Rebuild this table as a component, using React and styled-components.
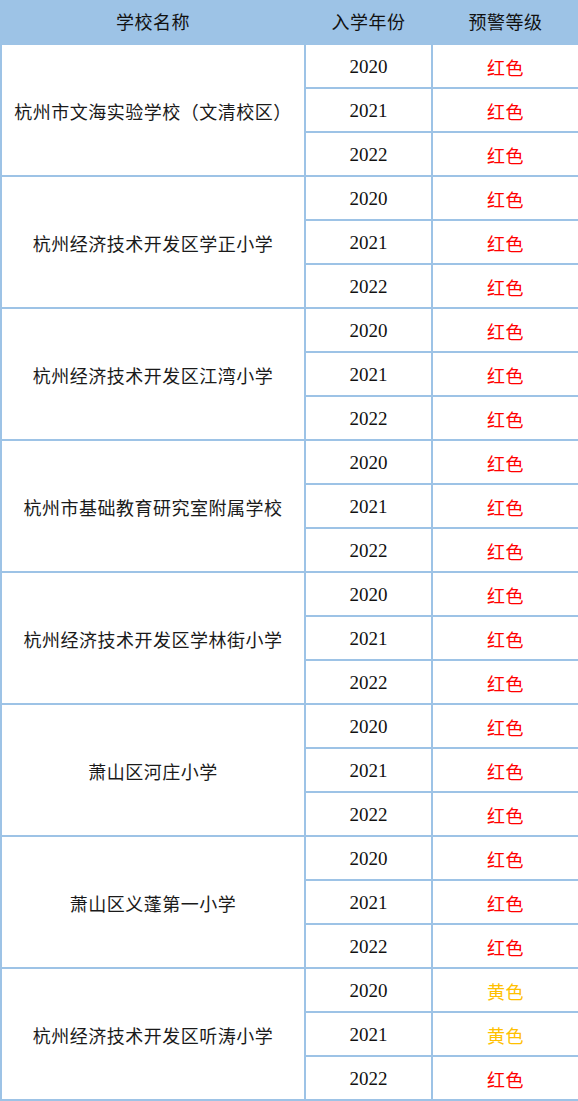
import React from "react";
import styled, { createGlobalStyle } from "styled-components";

const GlobalStyle = createGlobalStyle`
  html, body {
    margin: 0;
    padding: 0;
    background: #ffffff;
  }
`;

const Table = styled.table`
  width: 578px;
  border-collapse: collapse;
  table-layout: fixed;
  font-family: "Liberation Serif", "Noto Sans CJK SC", serif;
  font-size: 18px;
  color: #111;
`;

const Col = styled.col`
  width: ${(p) => p.$w}px;
`;

const HeadRow = styled.tr`
  background: #9dc3e6;
  height: 44px;
`;

const HeadCell = styled.th`
  font-weight: normal;
  font-family: "Noto Sans CJK SC", sans-serif;
  font-size: 18px;
  letter-spacing: 0.5px;
  text-align: center;
  vertical-align: middle;
  padding: 0 0 2px;
  border: 2px solid #9dc3e6;
  border-top: none;
`;

const Row = styled.tr`
  height: 44px;
`;

const Cell = styled.td`
  border: 2px solid #9dc3e6;
  text-align: center;
  vertical-align: middle;
  padding: 2px 0 0;
`;

const NameCell = styled(Cell)`
  font-family: "Noto Sans CJK SC", sans-serif;
  font-size: 18px;
  letter-spacing: 0.5px;
  color: #1a1a1a;
`;

const YearCell = styled(Cell)`
  font-family: "Liberation Serif", serif;
  font-size: 19px;
`;

const LevelCell = styled(Cell)`
  font-family: "Noto Sans CJK SC", sans-serif;
  font-size: 18px;
  letter-spacing: 0.5px;
  color: ${(p) => (p.$level === "黄色" ? "#ffc000" : "#ff0000")};
`;

const schools = [
  { name: "杭州市文海实验学校（文清校区）", levels: ["红色", "红色", "红色"] },
  { name: "杭州经济技术开发区学正小学", levels: ["红色", "红色", "红色"] },
  { name: "杭州经济技术开发区江湾小学", levels: ["红色", "红色", "红色"] },
  { name: "杭州市基础教育研究室附属学校", levels: ["红色", "红色", "红色"] },
  { name: "杭州经济技术开发区学林街小学", levels: ["红色", "红色", "红色"] },
  { name: "萧山区河庄小学", levels: ["红色", "红色", "红色"] },
  { name: "萧山区义蓬第一小学", levels: ["红色", "红色", "红色"] },
  { name: "杭州经济技术开发区听涛小学", levels: ["黄色", "黄色", "红色"] },
];

const years = ["2020", "2021", "2022"];

export default function App() {
  return (
    <>
      <GlobalStyle />
      <Table>
        <colgroup>
          <Col $w={304} />
          <Col $w={127} />
          <Col $w={147} />
        </colgroup>
        <thead>
          <HeadRow>
            <HeadCell>学校名称</HeadCell>
            <HeadCell>入学年份</HeadCell>
            <HeadCell>预警等级</HeadCell>
          </HeadRow>
        </thead>
        <tbody>
          {schools.map((s) =>
            years.map((y, i) => (
              <Row key={s.name + y}>
                {i === 0 && <NameCell rowSpan={3}>{s.name}</NameCell>}
                <YearCell>{y}</YearCell>
                <LevelCell $level={s.levels[i]}>{s.levels[i]}</LevelCell>
              </Row>
            ))
          )}
        </tbody>
      </Table>
    </>
  );
}
